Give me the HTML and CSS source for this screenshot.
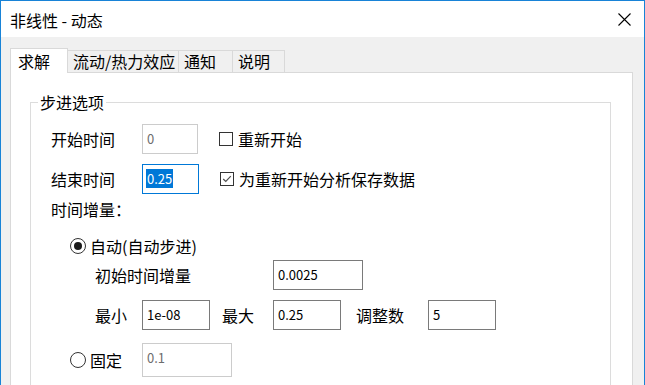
FILE: index.html
```html
<!DOCTYPE html>
<html lang="zh-CN">
<head>
    <meta charset="UTF-8">
    <title>非线性 - 动态</title>
    <link rel="stylesheet" href="styles.css">
</head>
<body>
    <div class="window">
        <div class="titlebar">
            <span class="title">非线性 - 动态</span>
            <svg class="close" width="13" height="13" viewBox="0 0 13 13">
                <path d="M0.5 0.5 L12.5 12.5 M12.5 0.5 L0.5 12.5" stroke="#000" stroke-width="1.1" fill="none"/>
            </svg>
        </div>
        <div class="main">
            <div class="tabs">
                <div class="tab active" style="width: 58px">求解</div>
                <div class="tab" style="width: 112px">流动/热力效应</div>
                <div class="tab" style="width: 55px">通知</div>
                <div class="tab" style="width: 53px">说明</div>
            </div>
            <div class="panel">
                <fieldset class="group">
                    <legend>步进选项</legend>

                    <div class="row r1">
                        <span class="label">开始时间</span>
                        <div class="field disabled" style="width: 56px">0</div>
                        <span class="check"></span>
                        <span class="check-text">重新开始</span>
                    </div>

                    <div class="row r2">
                        <span class="label">结束时间</span>
                        <div class="field focus" style="width: 57px"><span class="sel">0.25</span></div>
                        <span class="check">
                            <svg width="12" height="12" viewBox="0 0 12 12">
                                <path d="M2.2 6 L4.8 8.5 L9.8 3.2" stroke="#505050" stroke-width="1.2" fill="none"/>
                            </svg>
                        </span>
                        <span class="check-text">为重新开始分析保存数据</span>
                    </div>

                    <div class="row r3">
                        <span>时间增量：</span>
                    </div>

                    <div class="row r4">
                        <span class="radio on"></span>
                        <span class="radio-text">自动(自动步进)</span>
                    </div>

                    <div class="row r5">
                        <span class="label wide">初始时间增量</span>
                        <div class="field" style="width: 90px">0.0025</div>
                    </div>

                    <div class="row r6">
                        <span class="label small">最小</span>
                        <div class="field" style="width: 68px">1e-08</div>
                        <span class="label mid">最大</span>
                        <div class="field" style="width: 68px">0.25</div>
                        <span class="label adj">调整数</span>
                        <div class="field" style="width: 68px">5</div>
                    </div>

                    <div class="row r7">
                        <span class="radio"></span>
                        <span class="radio-text fixed">固定</span>
                        <div class="field disabled tall" style="width: 90px">0.1</div>
                    </div>
                </fieldset>
            </div>
        </div>
    </div>
</body>
</html>
```

FILE: styles.css
```css
html, body {
    margin: 0;
    height: 385px;
    overflow: hidden;
}
body {
    font-family: "Noto Sans CJK SC", "Microsoft YaHei", sans-serif;
    font-size: 16px;
    line-height: 20px;
    color: #000;
    background: #fff;
}
.window {
    width: 645px;
    height: 385px;
    box-sizing: border-box;
    border: 1px solid #1883d7;
    border-bottom: none;
    display: flex;
    flex-direction: column;
}
.titlebar {
    height: 36px;
    background: #fff;
    display: flex;
    align-items: center;
    justify-content: space-between;
    padding: 0 13px 0 9px;
    flex-shrink: 0;
}
.title {
    margin-top: 1px;
}
.close {
    display: block;
}
.main {
    flex: 1;
    background: #f0f0f0;
    padding: 11px 11px 0 9px;
    display: flex;
    flex-direction: column;
}
.tabs {
    display: flex;
    align-items: flex-end;
    height: 24px;
}
.tab {
    box-sizing: border-box;
    height: 22px;
    border: 1px solid #d9d9d9;
    border-bottom: none;
    padding-left: 5px;
    line-height: 21px;
    margin-left: -1px;
    background: #f0f0f0;
}
.tab.active {
    margin-left: 0;
    height: 25px;
    margin-bottom: -1px;
    background: #fff;
    padding-left: 7px;
    line-height: 24px;
    position: relative;
    z-index: 1;
}
.panel {
    flex: 1;
    background: #fff;
    border: 1px solid #d9d9d9;
    border-bottom: none;
    padding: 19px 21px 0 19px;
}
.group {
    margin: 0;
    border: 1px solid #dcdcdc;
    padding: 12px 0 60px 20px;
}
.group legend {
    padding: 0 2px;
    margin-left: -13px;
    line-height: 20px;
}
.row {
    display: flex;
    align-items: center;
}
.r1 { height: 30px; }
.r2 { height: 30px; margin-top: 10px; }
.r3 { height: 28px; margin-top: 1px; }
.r4 { height: 24px; margin-top: 11px; padding-left: 19px; }
.r5 { height: 30px; margin-top: 2px; padding-left: 44px; }
.r6 { height: 30px; margin-top: 10px; padding-left: 44px; }
.r7 { height: 34px; margin-top: 13px; padding-left: 19px; }
.label {
    width: 91px;
    flex-shrink: 0;
}
.label.wide { width: 178px; }
.label.small { width: 47px; }
.label.mid { width: 51px; margin-left: 12px; }
.label.adj { width: 72px; margin-left: 15px; }
.field {
    box-sizing: border-box;
    height: 30px;
    border: 1px solid #7a7a7a;
    padding: 5px 4px 0;
    font-size: 13px;
    line-height: 17px;
    background: #fff;
    flex-shrink: 0;
}
.field.tall {
    height: 34px;
    margin-left: 20px;
}
.field.disabled {
    border-color: #cccccc;
    color: #6d6d6d;
}
.field.focus {
    border-color: #0078d7;
}
.sel {
    background: #0078d7;
    color: #fff;
    padding: 0 1px;
    margin-left: -1px;
}
.check {
    box-sizing: border-box;
    width: 14px;
    height: 14px;
    border: 1px solid #333;
    margin-left: 21px;
    display: flex;
    align-items: center;
    justify-content: center;
    background: #fff;
    flex-shrink: 0;
}
.check-text {
    margin-left: 5px;
}
.radio {
    box-sizing: border-box;
    width: 16px;
    height: 16px;
    border: 1px solid #333;
    border-radius: 50%;
    display: flex;
    align-items: center;
    justify-content: center;
    flex-shrink: 0;
}
.radio.on::after {
    content: "";
    width: 8px;
    height: 8px;
    border-radius: 50%;
    background: #1a1a1a;
}
.radio-text {
    margin-left: 4px;
}
```
